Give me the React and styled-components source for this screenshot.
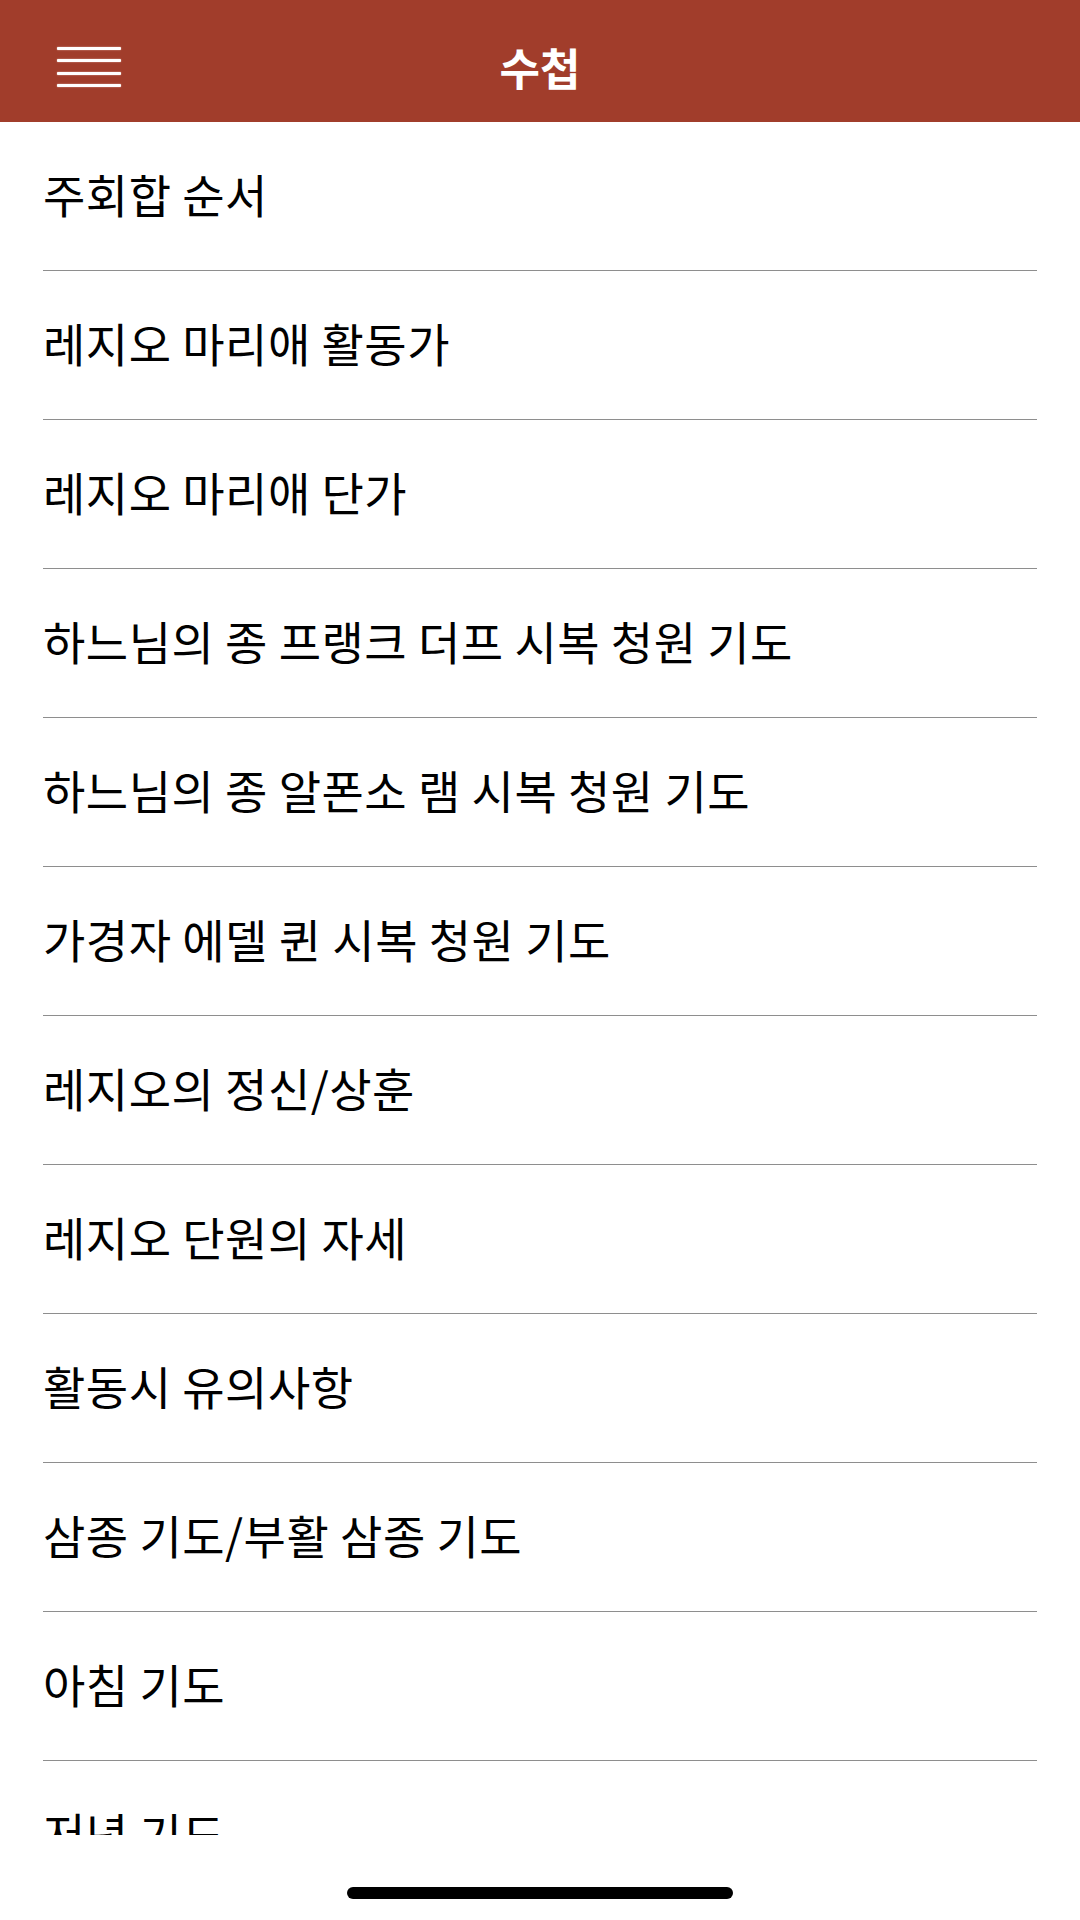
import React from "react";
import styled, { createGlobalStyle } from "styled-components";

const GlobalStyle = createGlobalStyle`
  html, body {
    margin: 0;
    padding: 0;
    background: #ffffff;
  }
  body {
    font-family: "Noto Sans CJK KR", "Noto Sans", sans-serif;
  }
`;

const Screen = styled.div`
  width: 1080px;
  height: 1920px;
  display: flex;
  flex-direction: column;
  background: #ffffff;
  overflow: hidden;
`;

const Header = styled.header`
  flex: 0 0 122px;
  box-sizing: border-box;
  padding-top: 12px;
  background: #a13d2b;
  display: grid;
  grid-template-columns: 200px 1fr 200px;
  align-items: center;
`;

const MenuButton = styled.button`
  justify-self: start;
  margin-left: 57px;
  width: 64px;
  height: 40px;
  padding: 0;
  border: 0;
  background: transparent;
  display: flex;
  flex-direction: column;
  justify-content: space-between;
  cursor: pointer;
`;

const MenuLine = styled.span`
  display: block;
  height: 3px;
  width: 100%;
  border-radius: 1px;
  background: #ffffff;
  box-shadow: 0 0 1.5px rgba(255, 235, 230, 0.8);
`;

const Title = styled.h1`
  margin: 0;
  text-align: center;
  color: #ffffff;
  font-size: 44px;
  font-weight: 700;
  line-height: 1;
`;

const List = styled.ul`
  flex: 0 0 1713px;
  margin: 0;
  padding: 0 43px;
  list-style: none;
  overflow: hidden;
`;

const Row = styled.li`
  flex-shrink: 0;
  height: 149px;
  box-sizing: border-box;
  padding-bottom: 6px;
  display: flex;
  align-items: center;
  border-bottom: 1px solid #8e8e8e;
  font-size: 46px;
  line-height: 1;
  color: #000000;
  letter-spacing: 0.5px;
  white-space: nowrap;
`;

const BottomBar = styled.div`
  flex: 1;
  display: flex;
  justify-content: center;
  padding-top: 52px;
`;

const HomeIndicator = styled.div`
  width: 386px;
  height: 12px;
  border-radius: 6px;
  background: #000000;
`;

const items = [
  "주회합 순서",
  "레지오 마리애 활동가",
  "레지오 마리애 단가",
  "하느님의 종 프랭크 더프 시복 청원 기도",
  "하느님의 종 알폰소 램 시복 청원 기도",
  "가경자 에델 퀸 시복 청원 기도",
  "레지오의 정신/상훈",
  "레지오 단원의 자세",
  "활동시 유의사항",
  "삼종 기도/부활 삼종 기도",
  "아침 기도",
  "저녁 기도",
];

const App = () => {
  return (
    <Screen>
      <GlobalStyle />
      <Header>
        <MenuButton aria-label="메뉴">
          <MenuLine />
          <MenuLine />
          <MenuLine />
          <MenuLine />
        </MenuButton>
        <Title>수첩</Title>
        <div />
      </Header>
      <List>
        {items.map((item) => (
          <Row key={item}>{item}</Row>
        ))}
      </List>
      <BottomBar>
        <HomeIndicator />
      </BottomBar>
    </Screen>
  );
};

export default App;
